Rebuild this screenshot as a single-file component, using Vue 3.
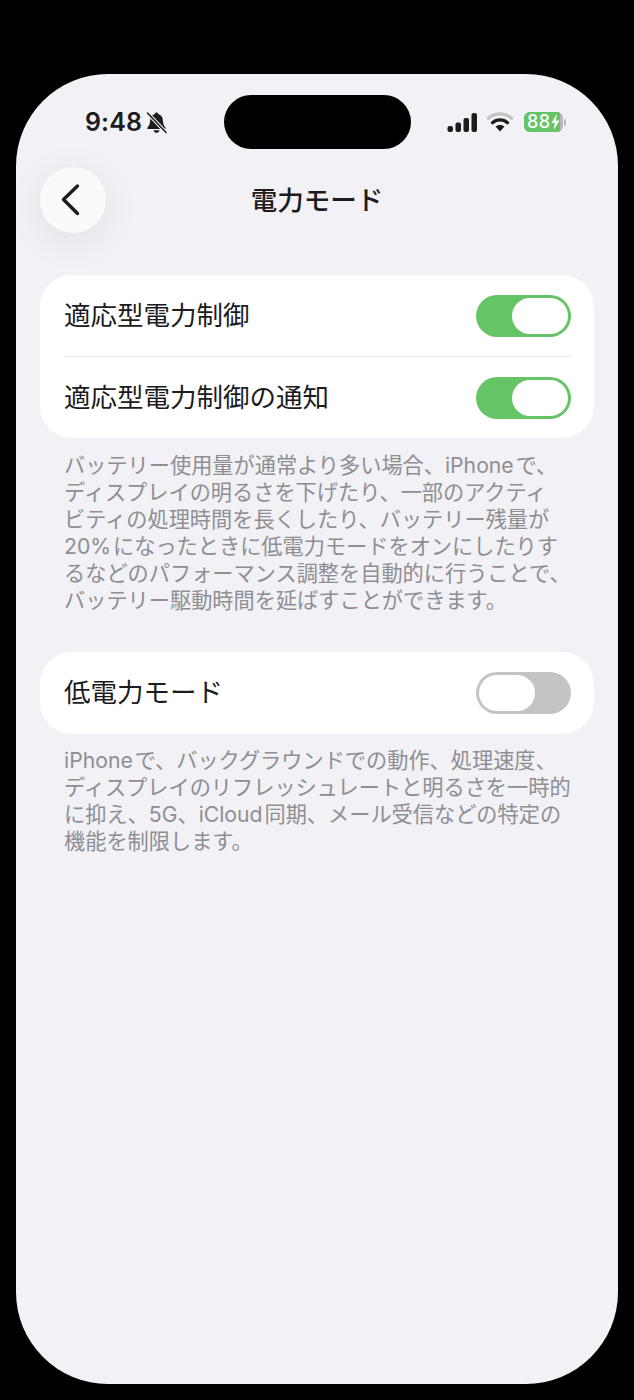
<script setup>
const footer1 = [
  'バッテリー使用量が通常より多い場合、iPhone\u200aで、',
  'ディスプレイの明るさを下げたり、一部のアクティ',
  'ビティの処理時間を長くしたり、バッテリー残量が',
  '20%\u200aになったときに低電力モードをオンにしたりす',
  'るなどのパフォーマンス調整を自動的に行うことで、',
  'バッテリー駆動時間を延ばすことができます。',
]
const footer2 = [
  'iPhone\u200aで、バックグラウンドでの動作、処理速度、',
  'ディスプレイのリフレッシュレートと明るさを一時的',
  'に抑え、5G、iCloud\u200a同期、メール受信などの特定の',
  '機能を制限します。',
]
</script>

<template>
  <div class="page">
    <div class="screen">
      <div class="status">
        <div class="status-left">
          <span class="time">9:48</span>
          <svg class="bell" width="23" height="23" viewBox="0 0 23 23">
            <path d="M11.500 1.500c-1 0-1.600.6-1.700 1.500C6.900 3.800 5.300 6.200 5.100 9.400c-.2 3.100-.7 5.200-2.600 7-.6.7-.2 1.700.8 1.700h16.400c1 0 1.400-1 .8-1.700-1.900-1.800-2.400-3.900-2.600-7-.2-3.200-1.800-5.600-4.700-6.400-.1-.9-.7-1.500-1.700-1.500z" fill="#1c1c1e"/>
            <path d="M8.500 19.200h6c-.2 1.500-1.500 2.600-3 2.600s-2.800-1.100-3-2.600z" fill="#1c1c1e"/>
            <path d="M2.500 2 21 21.500" stroke="#f1f1f6" stroke-width="3.600"/>
            <path d="M2.500 2 21 21.500" stroke="#1c1c1e" stroke-width="1.600" stroke-linecap="round"/>
          </svg>
        </div>
        <div class="island"></div>
        <div class="status-right">
          <svg width="30" height="19" viewBox="0 0 30 19">
            <rect x="0.500" y="13" width="5.500" height="6" rx="2" fill="#1c1c1e"/>
            <rect x="8.500" y="9.500" width="5.500" height="9.500" rx="2" fill="#1c1c1e"/>
            <rect x="16.500" y="5" width="5.500" height="14" rx="2" fill="#1c1c1e"/>
            <rect x="24.500" y="0" width="5.500" height="19" rx="2" fill="#1c1c1e"/>
          </svg>
          <svg class="wifi" width="26" height="20" viewBox="0 0 26 20">
            <path d="M1 6.500C7.800.2 18.200.2 25 6.500" fill="none" stroke="#c4c4c6" stroke-width="3.200" stroke-linecap="round"/>
            <path d="M5.500 10.800C9.800 7 16.200 7 20.500 10.800" fill="none" stroke="#1c1c1e" stroke-width="3.200" stroke-linecap="round"/>
            <path d="M13 19.500 8.500 14.600c2.600-2.200 6.400-2.200 9 0z" fill="#1c1c1e"/>
          </svg>
          <div class="battery">
            <div class="battery-body">
              <div class="battery-fill">
                <span class="battery-num">88</span>
                <svg width="9" height="16" viewBox="0 0 9 16"><path d="M5.800 0 .5 9h3.200L2.800 16 8.500 6.600H5z" fill="#fff"/></svg>
              </div>
            </div>
            <div class="battery-cap"></div>
          </div>
        </div>
      </div>

      <div class="nav">
        <button class="back" type="button" aria-label="戻る">
          <svg width="24" height="34" viewBox="0 0 24 34">
            <path d="M16.500 3 2.500 16.500l14 14" fill="none" stroke="#1c1c1e" stroke-width="3.400" stroke-linecap="round" stroke-linejoin="round"/>
          </svg>
        </button>
        <h1 class="title">電力モード</h1>
      </div>

      <section class="card first-card">
        <div class="row">
          <span class="label">適応型電力制御</span>
          <div class="toggle on"><div class="knob"></div></div>
        </div>
        <div class="separator"></div>
        <div class="row">
          <span class="label">適応型電力制御の通知</span>
          <div class="toggle on"><div class="knob"></div></div>
        </div>
      </section>
      <div class="footer">
        <div v-for="line in footer1" :key="line">{{ line }}</div>
      </div>

      <section class="card second-card">
        <div class="row tall">
          <span class="label">低電力モード</span>
          <div class="toggle off"><div class="knob"></div></div>
        </div>
      </section>
      <div class="footer footer-tight">
        <div v-for="line in footer2" :key="line">{{ line }}</div>
      </div>
    </div>
  </div>
</template>

<style>
html, body { margin: 0; background: #000; }
</style>

<style scoped>
.page {
  width: 634px;
  height: 1400px;
  background: #000;
  padding: 74px 16px 16px;
  box-sizing: border-box;
  font-family: Inter, "Noto Sans CJK JP", sans-serif;
  color: #1c1c1e;
}
.screen {
  width: 602px;
  height: 1310px;
  background: #f1f1f6;
  border-radius: 92px;
  padding: 0 24px;
  box-sizing: border-box;
  overflow: hidden;
}
.status {
  height: 93px;
  display: flex;
  align-items: flex-start;
  justify-content: space-between;
}
.status-left {
  display: flex;
  align-items: center;
  gap: 3px;
  margin: 33px 0 0 45px;
  height: 30px;
}
.time { font-size: 25px; font-weight: 560; letter-spacing: 0.1px; line-height: 30px; }
.bell { margin-top: 1px; }
.island {
  width: 187px;
  height: 54px;
  background: #000;
  border-radius: 27px;
  position: absolute;
  left: 223.500px;
  top: 95px;
}
.status-right {
  display: flex;
  align-items: center;
  gap: 10px;
  margin: 38px 28px 0 0;
  height: 20px;
}
.wifi { margin-right: 1px; }
.battery { display: flex; align-items: center; }
.battery-body {
  width: 39px;
  height: 20px;
  border-radius: 6px;
  background: #b7b7ba;
  overflow: hidden;
}
.battery-fill {
  width: 36px;
  height: 20px;
  background: #65c466;
  display: flex;
  align-items: center;
  padding-left: 3px;
  box-sizing: border-box;
}
.battery-num { font-size: 18px; line-height: 20px; font-weight: 500; color: #fff; letter-spacing: 0.5px; }
.battery-cap { width: 2px; height: 7px; background: #b7b7ba; border-radius: 0 2px 2px 0; margin-left: 1px; }
.nav {
  position: relative;
  height: 66px;
  display: flex;
  align-items: center;
  justify-content: center;
}
.back {
  position: absolute;
  left: 0;
  top: 0;
  width: 66px;
  height: 66px;
  border: 0;
  padding: 0;
  border-radius: 50%;
  background: #fafafd;
  box-shadow: 0 8px 40px rgba(0, 0, 0, 0.07);
  display: flex;
  align-items: center;
  justify-content: center;
}
.title { margin: 0; font-size: 26.500px; font-weight: 500; line-height: 36px; }
.card {
  background: #fff;
  border-radius: 32px;
  padding: 0 24px;
}
.first-card { margin-top: 42px; }
.second-card { margin-top: 38px; }
.row {
  height: 81px;
  display: flex;
  align-items: center;
  justify-content: space-between;
  font-size: 26.500px;
  line-height: 36px;
}
.row.tall { height: 82px; }
.label { margin-bottom: 2px; }
.separator { height: 1px; background: #e4e4e6; }
.toggle {
  width: 95px;
  height: 42px;
  margin-right: -1px;
  border-radius: 21px;
  display: flex;
  align-items: center;
  padding: 3px;
  box-sizing: border-box;
}
.toggle.on { background: #65c466; justify-content: flex-end; }
.toggle.off { background: #c4c4c6; justify-content: flex-start; }
.knob { width: 56px; height: 36px; border-radius: 18px; background: #fff; }
.footer {
  padding: 14px 24px 0;
  font-size: 21.200px;
  line-height: 27px;
  color: #8e8e93;
  white-space: nowrap;
}
.footer-tight { padding-top: 13px; }
</style>
